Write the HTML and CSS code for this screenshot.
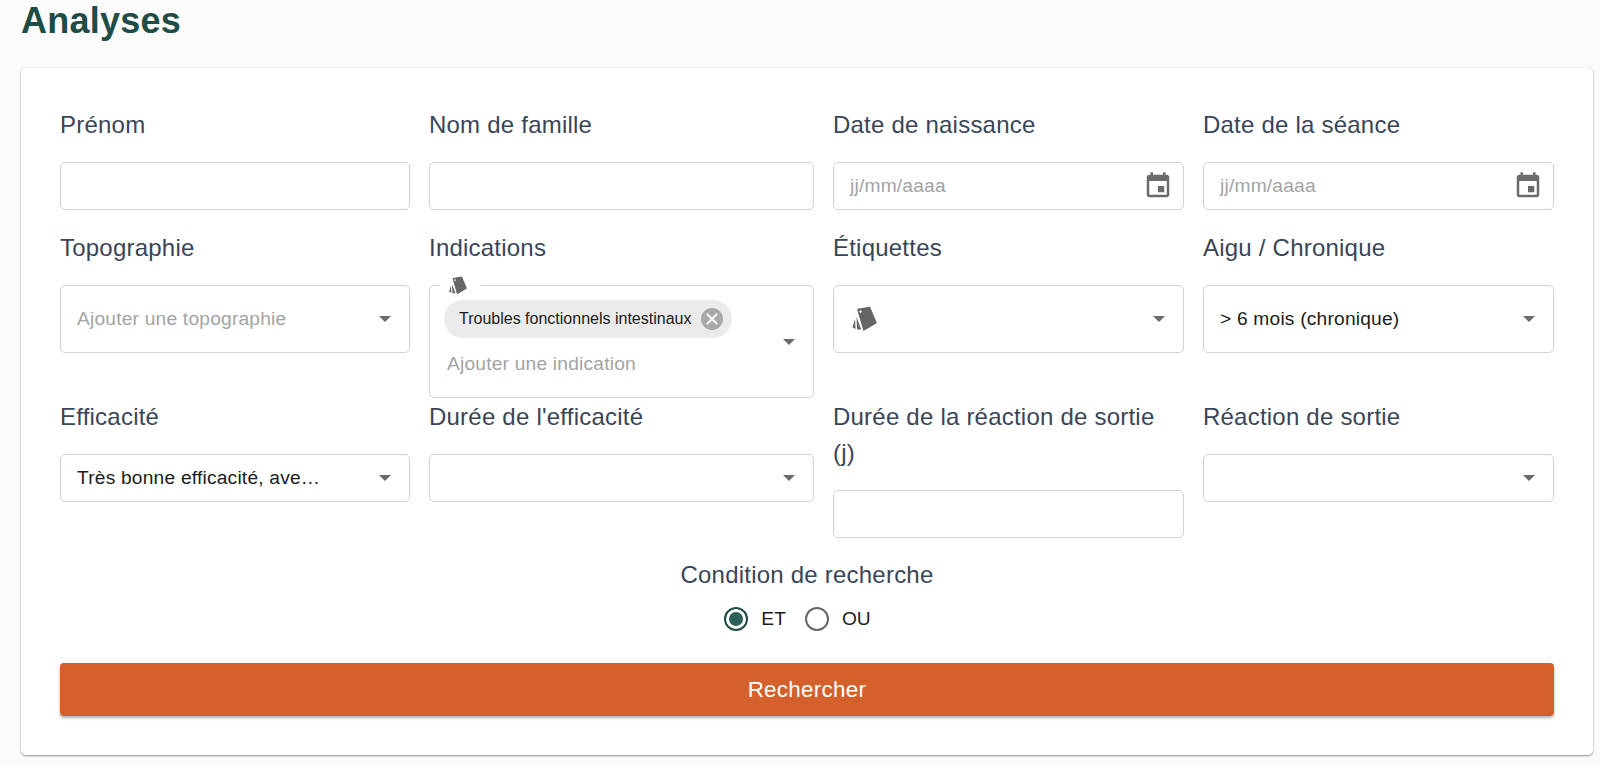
FILE: index.html
```html
<!DOCTYPE html>
<html lang="fr">
<head>
<meta charset="utf-8">
<title>Analyses</title>
<link rel="stylesheet" href="styles.css">
</head>
<body>
<svg class="defs" width="0" height="0" aria-hidden="true">
  <defs>
    <symbol id="tags" viewBox="0 0 26 26">
      <path stroke="#666" stroke-width="1.500" stroke-linejoin="round" d="M7 3.500 18.500 1.400 25 16.800 12.800 23.900z"/>
      <circle cx="9.500" cy="5.600" r="1.200" fill="#fff"/>
      <path d="M5.500 11 10.300 23.800 6 23.300zM4 13 4.600 23 1.500 21.500z"/>
    </symbol>
    <symbol id="calendar" viewBox="0 0 24 24">
      <path d="M17 12h-5v5h5v-5zM16 1v2H8V1H6v2H5c-1.110 0-1.990.9-1.990 2L3 19c0 1.100.89 2 2 2h14c1.100 0 2-.9 2-2V5c0-1.100-.9-2-2-2h-1V1h-2zm3 18H5V8h14v11z"/>
    </symbol>
  </defs>
</svg>
<main class="page">
  <h1 class="title">Analyses</h1>
  <section class="card">
    <form class="grid">
      <div class="field">
        <label class="label">Prénom</label>
        <div class="box"></div>
      </div>
      <div class="field">
        <label class="label">Nom de famille</label>
        <div class="box"></div>
      </div>
      <div class="field">
        <label class="label">Date de naissance</label>
        <div class="box date"><span class="placeholder">jj/mm/aaaa</span><svg class="cal"><use href="#calendar"/></svg></div>
      </div>
      <div class="field">
        <label class="label">Date de la séance</label>
        <div class="box date"><span class="placeholder">jj/mm/aaaa</span><svg class="cal"><use href="#calendar"/></svg></div>
      </div>

      <div class="field">
        <label class="label">Topographie</label>
        <div class="box tall select"><span class="placeholder">Ajouter une topographie</span><i class="arrow"></i></div>
      </div>
      <div class="field">
        <label class="label">Indications</label>
        <div class="box multi">
          <svg class="legend-icon"><use href="#tags"/></svg>
          <div class="multi-content">
            <span class="chip">Troubles fonctionnels intestinaux<span class="chip-x"><svg viewBox="0 0 22 22"><path d="M6.500 6.500l9 9M15.500 6.500l-9 9"/></svg></span></span>
            <span class="placeholder multi-ph">Ajouter une indication</span>
          </div>
          <i class="arrow"></i>
        </div>
      </div>
      <div class="field">
        <label class="label">Étiquettes</label>
        <div class="box tall select"><svg class="tag-icon"><use href="#tags"/></svg><i class="arrow"></i></div>
      </div>
      <div class="field">
        <label class="label">Aigu / Chronique</label>
        <div class="box tall select"><span class="value">&gt; 6 mois (chronique)</span><i class="arrow"></i></div>
      </div>

      <div class="field">
        <label class="label">Efficacité</label>
        <div class="box select"><span class="value">Très bonne efficacité, ave…</span><i class="arrow"></i></div>
      </div>
      <div class="field">
        <label class="label">Durée de l'efficacité</label>
        <div class="box select"><i class="arrow"></i></div>
      </div>
      <div class="field">
        <label class="label">Durée de la réaction de sortie<br>(j)</label>
        <div class="box"></div>
      </div>
      <div class="field">
        <label class="label">Réaction de sortie</label>
        <div class="box select"><i class="arrow"></i></div>
      </div>
    </form>

    <div class="condition">
      <div class="label">Condition de recherche</div>
      <div class="radios">
        <span class="radio on"></span><span class="radio-text">ET</span>
        <span class="radio"></span><span class="radio-text">OU</span>
      </div>
    </div>
    <button class="submit" type="button">Rechercher</button>
  </section>
</main>
</body>
</html>
```
FILE: styles.css
```css
* { box-sizing: border-box; }
html, body { margin: 0; padding: 0; height: 100%; overflow: hidden; }
body { background: #fbfbfb; font-family: "Liberation Sans", Arial, sans-serif; color: #1c1c1c; }
.defs { position: absolute; }
.page { padding: 0 7px 0 21px; }
.title { margin: 0; height: 68px; font-size: 36px; line-height: 42px; font-weight: 700; color: #1f4d45; letter-spacing: .25px; }
.card { background: #fff; border-radius: 5px; height: 687px; padding: 39px 39px 0; box-shadow: 0 1px 2px rgba(0,0,0,.4), 0 0 4px rgba(0,0,0,.06); }
.grid { display: grid; grid-template-columns: 350px 385px 351px 351px; column-gap: 19px; align-items: start; }
.label { display: block; font-size: 24px; line-height: 36px; color: #3a4557; margin-bottom: 19px; letter-spacing: .22px; }
.box { position: relative; display: flex; align-items: center; height: 48px; margin-bottom: 20px; padding: 0 16px; background: #fff; border: 1px solid #d2d2d2; border-radius: 5px; }
.tall { height: 68px; }
.placeholder { font-size: 19.200px; color: #a3a3a3; letter-spacing: .2px; }
.value { font-size: 19.200px; color: #1c1c1c; letter-spacing: .2px; }
.date { justify-content: space-between; padding-right: 10.500px; }
.cal { width: 30px; height: 30px; fill: #6b6b6b; }
.arrow { position: absolute; right: 18px; top: 50%; margin-top: -3px; width: 0; height: 0; border-left: 6px solid transparent; border-right: 6px solid transparent; border-top: 6px solid #6b6b6b; }
.tag-icon { width: 26px; height: 26px; fill: #666; margin-left: 1px; }
.multi { height: 113px; margin-bottom: 1px; padding: 0; }
.multi::before { content: ""; position: absolute; left: 9.500px; top: -1px; width: 41px; height: 1px; background: #fff; }
.legend-icon { position: absolute; left: 17.500px; top: -10px; width: 19px; height: 19px; fill: #666; }
.multi-content { display: flex; flex-direction: column; align-items: flex-start; padding: 14px 0 0 14px; align-self: flex-start; }
.chip { display: inline-flex; align-items: center; height: 38px; padding: 0 9px 0 15px; border-radius: 19px; background: #ebebeb; font-size: 16px; color: #1c1c1c; }
.chip-x { display: block; width: 22px; height: 22px; margin-left: 10px; border-radius: 50%; background: #a8a8a8; }
.chip-x svg { display: block; width: 22px; height: 22px; fill: none; stroke: #f2f2f2; stroke-width: 2.400; stroke-linecap: round; }
.multi-ph { margin: 15px 0 0 3px; line-height: 22px; }
.condition { display: flex; flex-direction: column; align-items: center; margin-top: -1px; }
.condition .label { margin-bottom: 8px; }
.radios { display: flex; align-items: center; height: 36px; }
.radio { position: relative; display: block; width: 24px; height: 24px; border: 2px solid #666; border-radius: 50%; }
.radio.on { border-color: #1f4d45; }
.radio.on::after { content: ""; position: absolute; left: 3px; top: 3px; width: 14px; height: 14px; border-radius: 50%; background: #2c5f55; }
.radio-text { font-size: 19.200px; color: #1c1c1c; margin: 0 19px 0 13px; }
.submit { display: block; width: 100%; height: 53px; margin-top: 26px; border: 0; border-radius: 4px; background: #d4602c; color: #fff; font: 22.400px "Liberation Sans", Arial, sans-serif; letter-spacing: .3px; box-shadow: 0 2px 3px rgba(0,0,0,.3); }
```
